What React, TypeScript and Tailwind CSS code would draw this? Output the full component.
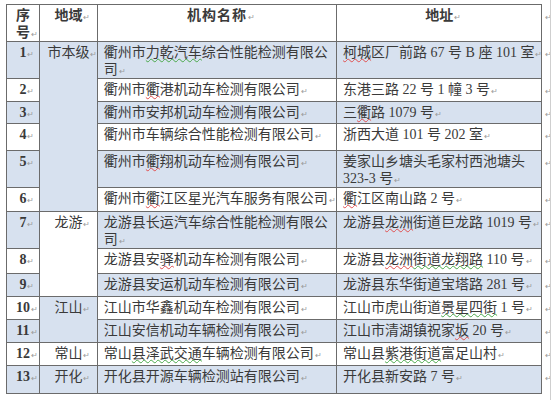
type Seg = string | { t: string; c: "r" | "g" };

type Row = {
  no: number;
  h: string;
  area?: { name: string; span: number; blue: boolean };
  name: Seg[];
  addr: Seg[];
  blue: boolean;
};

const rows: Row[] = [
  {
    no: 1,
    h: "h-[37px]",
    area: { name: "市本级", span: 6, blue: true },
    name: ["衢州市", { t: "力乾汽车", c: "g" }, "综合性能检测有限公司"],
    addr: [{ t: "柯城", c: "r" }, "区厂前路 67 号 B 座 101 室"],
    blue: true,
  },
  { no: 2, h: "h-[23px]", name: ["衢州市", { t: "衢", c: "r" }, "港机动车检测有限公司"], addr: ["东港三路 22 号 1 幢 3 号"], blue: false },
  { no: 3, h: "h-[22px]", name: ["衢州市安邦机动车检测有限公司"], addr: ["三", { t: "衢", c: "r" }, "路 1079 号"], blue: true },
  { no: 4, h: "h-[27px]", name: ["衢州市车辆综合性能检测有限公司"], addr: ["浙西大道 101 号 202 室"], blue: false },
  { no: 5, h: "h-[37px]", name: ["衢州市", { t: "衢", c: "r" }, "翔机动车检测有限公司"], addr: ["姜家山乡塘头毛家村西池塘头 323-3 号"], blue: true },
  { no: 6, h: "h-[24px]", name: ["衢州市", { t: "衢", c: "r" }, "江区星光汽车服务有限公司"], addr: [{ t: "衢", c: "r" }, "江区南山路 2 号"], blue: false },
  {
    no: 7,
    h: "h-[37px]",
    area: { name: "龙游", span: 3, blue: false },
    name: ["龙游县长运汽车综合性能检测有限公司"],
    addr: ["龙游县", { t: "龙洲", c: "r" }, "街道巨龙路 1019 号"],
    blue: true,
  },
  { no: 8, h: "h-[25px]", name: ["龙游县安", { t: "驿", c: "r" }, "机动车检测有限公司"], addr: ["龙游县", { t: "龙洲", c: "r" }, { t: "街道龙翔路", c: "g" }, " 110 号"], blue: false },
  { no: 9, h: "h-[23px]", name: ["龙游县安运机动车检测有限公司"], addr: ["龙游县东华街道宝塔路 281 号"], blue: true },
  {
    no: 10,
    h: "h-[23px]",
    area: { name: "江山", span: 2, blue: true },
    name: ["江山市华鑫机动车检测有限公司"],
    addr: ["江山市虎山街道", { t: "景星四街", c: "g" }, " 1 号"],
    blue: false,
  },
  { no: 11, h: "h-[23px]", name: ["江山安信机动车辆检测有限公司"], addr: ["江山市清湖镇祝家", { t: "坂", c: "r" }, " 20 号"], blue: true },
  {
    no: 12,
    h: "h-[23px]",
    area: { name: "常山", span: 1, blue: false },
    name: ["常山", { t: "县泽武交通", c: "g" }, "车辆检测有限公司"],
    addr: ["常山县", { t: "紫港街道", c: "g" }, "富足山村"],
    blue: false,
  },
  {
    no: 13,
    h: "h-[28px]",
    area: { name: "开化", span: 1, blue: true },
    name: ["开化县开源车辆检测站有限公司"],
    addr: ["开化县新安路 7 号"],
    blue: true,
  },
];

// Word paragraph mark; zero width so it never forces a wrap
function Mark() {
  return (
    <span className="inline-block w-0 overflow-visible whitespace-nowrap text-[8px] leading-none font-normal text-[#9a9a9a]">
      <span className="pl-[1px]">↵</span>
    </span>
  );
}

function Text({ segs }: { segs: Seg[] }) {
  return (
    <>
      {segs.map((s, i) =>
        typeof s === "string" ? (
          <span key={i}>{s}</span>
        ) : (
          <span
            key={i}
            className={
              s.c === "r"
                ? "underline decoration-wavy decoration-[#e05050] decoration-1 underline-offset-1"
                : "underline decoration-wavy decoration-[#4aa84a] decoration-1 underline-offset-1"
            }
          >
            {s.t}
          </span>
        )
      )}
      <Mark />
    </>
  );
}

const cell = "border border-[#6b6b6b] align-top pt-[3px] px-[6px]";
const blueBg = "bg-[#d7e1ef]";

export default function App() {
  return (
    <div
      className="h-[400px] w-[551px] overflow-hidden border-r border-[#cfcfcf] bg-white pl-[6px] pt-[4px] text-[14px] leading-[16.5px] text-[#3a3a3a]"
      style={{ fontFamily: '"Liberation Serif", "Noto Sans CJK SC", serif' }}
    >
      <table className="table-fixed border-collapse">
        <colgroup>
          <col className="w-[33px]" />
          <col className="w-[58px]" />
          <col className="w-[240px]" />
          <col className="w-[206px]" />
          <col className="w-[8px]" />
        </colgroup>
        <thead>
          <tr className="h-[37px] font-bold">
            <td className={`${cell} px-0 text-center`}>
              序<br />号<Mark />
            </td>
            <td className={`${cell} text-center`}>
              地域<Mark />
            </td>
            <td className={`${cell} text-center tracking-[1px]`}>
              机构名称<Mark />
            </td>
            <td className={`${cell} text-center`}>
              地址<Mark />
            </td>
            <td className="align-top pt-[3px] pl-[2px]">
              <Mark />
            </td>
          </tr>
        </thead>
        <tbody>
          {rows.map((r) => (
            <tr key={r.no} className={r.h}>
              <td className={`${cell} px-0 text-center font-bold ${r.blue ? blueBg : ""}`}>
                {r.no}
                <Mark />
              </td>
              {r.area && (
                <td rowSpan={r.area.span} className={`${cell} text-center ${r.area.blue ? blueBg : ""}`}>
                  {r.area.name}
                  <Mark />
                </td>
              )}
              <td className={`${cell} ${r.blue ? blueBg : ""}`}>
                <Text segs={r.name} />
              </td>
              <td className={`${cell} ${r.blue ? blueBg : ""}`}>
                <Text segs={r.addr} />
              </td>
              <td className="align-top pt-[3px] pl-[2px]">
                <Mark />
              </td>
            </tr>
          ))}
        </tbody>
      </table>
    </div>
  );
}
